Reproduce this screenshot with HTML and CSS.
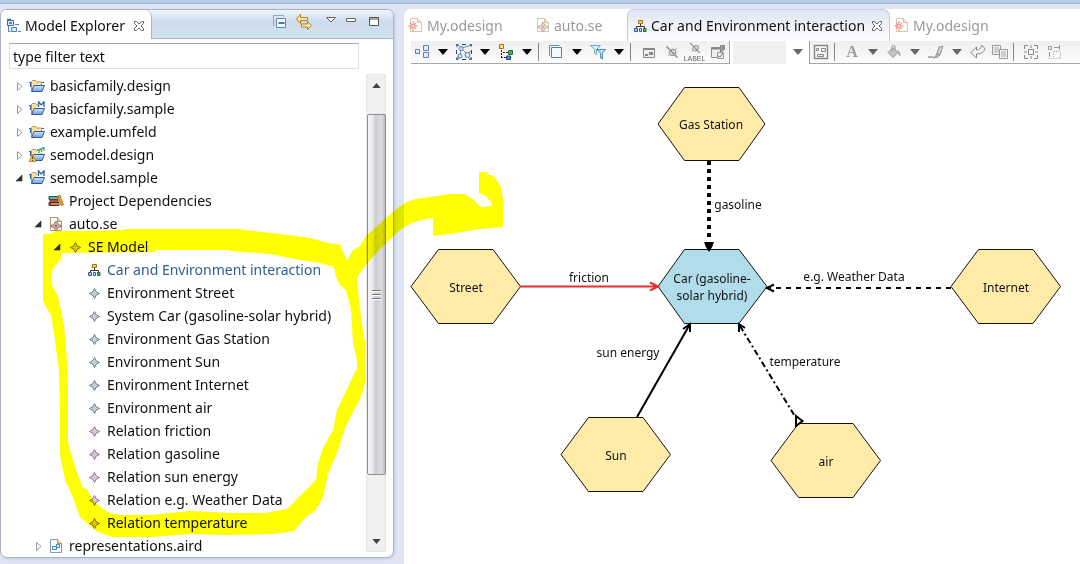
FILE: index.html
```
<!DOCTYPE html>
<html lang="en">
<head>
<meta charset="utf-8">
<title>Model Explorer</title>
<link rel="stylesheet" href="styles.css">
</head>
<body>
<svg class="defs" aria-hidden="true">
  <defs>
    <linearGradient id="folderBlue" x1="0" y1="0" x2="0" y2="1"><stop offset="0" stop-color="#d6e8fa"/><stop offset="1" stop-color="#6d9edb"/></linearGradient>
    <symbol id="closed" viewBox="0 0 15 16"><path d="M3.500 4.500v8l4.500-4z" fill="#fff" stroke="#9a9a9a"/></symbol>
    <symbol id="opened" viewBox="0 0 15 16"><path d="M8 5v6H2z" fill="#333" stroke="#222" stroke-width=".6"/></symbol>
    <symbol id="folder" viewBox="0 0 16 16">
      <path d="M2.500 12.500v-9l1-1h3l1 1.500h5v3" fill="#f7e3a4" stroke="#b8964a"/>
      <path d="M0 4.500h2M13 4.500h2M1.500 5v4" stroke="#3b62ab" fill="none"/>
      <path d="M5 7.500h10.500l-2.500 6H2.500z" fill="url(#folderBlue)" stroke="#2f57a5"/>
    </symbol>
    <symbol id="folderM" viewBox="0 0 16 16">
      <use href="#folder"/><path d="M8.500 7V-.500h7.500V7z" fill="#fff"/><path d="M9.500 6V.8L12.300 4 15 .8V6" fill="none" stroke="#2f6f9c" stroke-width="1.400"/>
    </symbol>
    <symbol id="folderW" viewBox="0 0 16 16">
      <use href="#folder"/><path d="M8 0h8v6H8z" fill="#fff"/><path d="M8 3h2v3M10.500 2h2v3M13 .8h2v3" fill="none" stroke="#2a9a6b" stroke-width="1.300"/>
      <path d="M3.500 7.500l3.500 7H.3z" fill="#f4c64e" stroke="#c98a1b"/><path d="M3.500 9.500v2.500M3.500 13v1" stroke="#5d3500"/>
    </symbol>
    <symbol id="books" viewBox="0 0 16 16">
      <path d="M1 3.500h9v3H1z" fill="#2b8a8d" stroke="#1b585e"/><path d="M2 5h8" stroke="#9ed6cf"/>
      <path d="M2 6.500h8v3H2z" fill="#c64d33" stroke="#813022"/>
      <path d="M1 9.500h10v3H1z" fill="#8f5136" stroke="#5e2f1e"/><path d="M3 11h8" stroke="#e7c39c"/>
      <path d="M10 3l2-1 3.500 10-2.500.5z" fill="#eda42d" stroke="#b06d10" stroke-width=".7"/>
    </symbol>
    <symbol id="page" viewBox="0 0 16 16"><path d="M2.500 1.500h7l4 4v9h-11z" fill="#fffdf6" stroke="#a99a70"/><path d="M9.500 1.500v4h4" fill="#ecd596" stroke="#b98f43"/></symbol>
    <symbol id="seFile" viewBox="0 0 16 16"><use href="#page"/><path d="M8 5l2 3 3.500 2L10 12l-2 3-2-3-3.500-2L6 8z" fill="#c5b9be" stroke="#8b7076"/><circle cx="8" cy="10" r="1.500" fill="#e0574c"/></symbol>
    <symbol id="airdFile" viewBox="0 0 16 16"><path d="M2.500 1.500h7l4 4v9h-11z" fill="#fbfdff" stroke="#7d9bb4"/><path d="M9.500 1.500v4h4" fill="#ecd596" stroke="#b98f43"/><path d="M4.500 8.500h4v3h-4zM8.500 6.500h3v3h-3z" fill="#e5f2fb" stroke="#3c88b8"/></symbol>
    <symbol id="odFile" viewBox="0 0 16 16"><use href="#page"/><path d="M.5 9h9M2 6l6 6M2 12l6-6M5 4v10" stroke="#f0523f" stroke-width="1.300"/><circle cx="5" cy="9" r="1.500" fill="#fff" stroke="#f0523f"/></symbol>
    <symbol id="star" viewBox="0 0 16 16"><path d="M8.500 3.500l1.700 3.300 3.300 1.700-3.300 1.700-1.700 3.300-1.700-3.300-3.300-1.700 3.300-1.700z" fill="#ccd0d6" stroke="currentColor"/></symbol>
    <symbol id="tree" viewBox="0 0 16 16">
      <path d="M8.500 6v3M4.500 11V8.500h8V11" fill="none" stroke="#333"/>
      <path d="M6.500 2.500h4v3h-4z" fill="#f9cf64" stroke="#a8701d"/><path d="M2.500 10.500h3v3h-3z" fill="#a9c4ec" stroke="#37599a"/><path d="M7.500 10.500h2v3h-2z" fill="#dfe7f3" stroke="#37599a"/><path d="M11.500 10.500h2.500v3h-2.500z" fill="#51b063" stroke="#1c6c36"/>
    </symbol>
    <symbol id="x" viewBox="0 0 12 12"><path d="M1.500 1.500h2l2.500 2.500 2.500-2.500h2v2L8 6l2.500 2.500v2h-2L6 8l-2.500 2.500h-2v-2L4 6 1.500 3.500z" fill="#fff" stroke="#666"/></symbol>
    <symbol id="explorer" viewBox="0 0 16 16">
      <path d="M1.500 2.500h6v5h-6z" fill="#d9ebfb" stroke="#2f6fb2"/><path d="M1 1.500h4M3 5h3" stroke="#2f6fb2" stroke-width="1.500"/>
      <path d="M2.500 8v5.500h2M9 6.500h4" fill="none" stroke="#4a80b8"/><path d="M5.500 9.500h5v4h-5z" fill="#d9ebfb" stroke="#4a80b8"/><path d="M12 13.500h3" stroke="#4a80b8"/>
    </symbol>
    <symbol id="collapse" viewBox="0 0 16 16"><path d="M2.500 11.500h-1v-10h10v1" fill="none" stroke="#8ba6bd"/><path d="M4.500 4.500h9v9h-9z" fill="#f3f9fd" stroke="#5b86ad"/><path d="M6.500 9h6" stroke="#174a84" stroke-width="1.400"/></symbol>
    <symbol id="link" viewBox="0 0 16 16"><path d="M4.500.5v3h7v3h-7v3L.5 5z" fill="#fde9a9" stroke="#bf7d0e"/><path d="M11.500 7.500v2.500h-6v3h6v2.500l4-4z" fill="#fde9a9" stroke="#bf7d0e"/></symbol>
    <symbol id="menu" viewBox="0 0 12 16"><path d="M1.500 4.500h9L6 9z" fill="#fff" stroke="#666"/></symbol>
    <symbol id="min" viewBox="0 0 12 16"><path d="M1.500 5.500h9v3h-9z" fill="#fff" stroke="#666"/></symbol>
    <symbol id="max" viewBox="0 0 12 16"><path d="M1.500 4.500h9v8h-9zM1.500 6h9" fill="#fff" stroke="#555"/></symbol>
    <symbol id="down" viewBox="0 0 10 6"><path d="M0 0h10L5 6z" fill="currentColor"/></symbol>
    <symbol id="arrange" viewBox="0 0 16 16"><g fill="#dceafa" stroke="#6380a5"><path d="M1.500 5.500h4v4h-4z"/><path d="M9.500 1.500h5v5h-5z"/><path d="M9.500 8.500h5v5h-5z"/></g></symbol>
    <symbol id="select" viewBox="0 0 16 16"><path d="M1 0v3M0 1h3M15 0v3M13 1h3M1 13v3M0 15h3M15 13v3M13 15h3M6 .5h4M6 15.500h4M.5 6v4M15.500 6v4" stroke="#174f86"/><path d="M5 6l-1 6M6 5l5 5 4-3M5 4l8-2" stroke="#789" fill="none"/><g fill="#dceafa" stroke="#4e79aa"><circle cx="5" cy="4.500" r="2"/><circle cx="4" cy="12" r="2"/><circle cx="11.500" cy="11" r="2.500"/></g></symbol>
    <symbol id="align" viewBox="0 0 16 16"><path d="M3.500 6v8M5 8.500h5M3 13.500h5" stroke="#222" stroke-dasharray="2 1"/><path d="M1.500.5h4v4h-4z" fill="#ffe58b" stroke="#a8730e"/><path d="M10.500 6.500h4v4h-4z" fill="#50ae5e" stroke="#23703a"/><path d="M8.500 12h4v3.500h-4z" fill="#4f82be" stroke="#244f88"/></symbol>
    <symbol id="layers" viewBox="0 0 16 16"><path d="M1.500 12v-10.500h10" fill="none" stroke="#6796bd"/><path d="M3.500 3.500h10v10h-10z" fill="#f1fafe" stroke="#4f80aa"/></symbol>
    <symbol id="filter" viewBox="0 0 16 16"><path d="M.5 1.500h10L6.500 5.500v5l-2-1v-4z" fill="#d8f0fb" stroke="#72a7c9"/><path d="M6.500 5.500h9L12.500 9v6l-2-1V9z" fill="#b7e0f3" stroke="#4e8db5"/></symbol>
    <symbol id="hide" viewBox="0 0 16 16"><path d="M2.500 4.500h11v9h-11z" fill="#eee" stroke="#8c8c8c"/><path d="M2 5h12" stroke="#888" stroke-width="2"/><path d="M8 8h4v3H8zM4 10h3v2H4z" fill="#888"/></symbol>
    <symbol id="pin" viewBox="0 0 16 16"><path d="M5 8.500l3-3.500 3.500 1 .5 3-3 2.500-3-.5z" fill="#ddd" stroke="#888"/><path d="M2.500 2.500l11 11" stroke="#888" stroke-width="1.400"/><path d="M4 12l2-2M11.500 5.500L13 4" stroke="#aaa"/></symbol>
    <symbol id="export" viewBox="0 0 16 16"><path d="M1.500 3.500h9v10h-9z" fill="#eee" stroke="#8c8c8c"/><path d="M1 4.500h9" stroke="#888" stroke-width="2"/><path d="M10.500 1.500h4v4l-3 2-1-2z" fill="#999" stroke="#888"/><path d="M7.500 8.500h6v6h-6z" fill="#eee" stroke="#999"/><path d="M8 12l2 1 3-4" fill="none" stroke="#777"/></symbol>
    <symbol id="layout" viewBox="0 0 16 16"><path d="M1.500 1.500h13v13h-13z" fill="#f6f6f6" stroke="#888" stroke-width="1.400"/><path d="M3.500 4.500h2v2h-2zM8.500 4.500h4v3h-4zM4.500 10.500h6v2h-6z" fill="none" stroke="#888"/></symbol>
    <symbol id="bucket" viewBox="0 0 16 16"><path d="M2 8.500l5-5 5 5-5 5z" fill="#c4c4c4" stroke="#999"/><path d="M6 7V2q1.500-2 3 0v5" fill="none" stroke="#999"/><path d="M11 6q5 2 3 7l-2-4z" fill="#aaa"/></symbol>
    <symbol id="brush" viewBox="0 0 16 16"><path d="M0 13h5" stroke="#999" stroke-width="1.500"/><path d="M5 14q3-1 4-5l3 2q-2 3-7 3z" fill="#aaa" stroke="#999"/><path d="M9 9l2-6 4-1-3 9z" fill="#ccc" stroke="#999"/></symbol>
    <symbol id="undo" viewBox="0 0 16 16"><path d="M.8 8.500L6.500 3v3q4 0 5-4.500 3.500 2 3.500 3.500-2 5-8.500 5v4z" fill="#f4f4f4" stroke="#888"/></symbol>
    <symbol id="copy" viewBox="0 0 16 16"><path d="M.5 1.500h8v9h-8z" fill="#f4f4f4" stroke="#999"/><path d="M2 4h5M2 6h5M2 8h5" stroke="#aaa"/><path d="M7.500 5.500h8v9h-8z" fill="#f4f4f4" stroke="#999"/><path d="M9 8h5M9 10h5M9 12h5" stroke="#aaa"/></symbol>
    <symbol id="fit" viewBox="0 0 16 16"><path d="M1.500 5V1.500H5M11 1.500h3.500V5M14.500 11v3.500H11M5 14.500H1.500V11M8 1v3M8 12v3M1 8h3M12 8h3" fill="none" stroke="#888"/><path d="M5.500 5.500h5v5h-5z" fill="none" stroke="#888"/></symbol>
    <symbol id="resize" viewBox="0 0 16 16"><path d="M2.500 2.500h3v3h-3zM8 3.500h5M13.500 1v5M3.500 8v5" fill="none" stroke="#999"/><path d="M2.500 14.500h12V7M7.500 13V7.500H13" fill="none" stroke="#aaa" stroke-dasharray="1 1"/></symbol>
  </defs>
</svg>

<div class="strip"></div>
<main class="workbench">
  <section class="explorer">
    <header class="view-head">
      <div class="view-tab"><svg class="icon"><use href="#explorer"/></svg><span>Model Explorer</span><button class="bare" aria-label="Close view"><svg class="close"><use href="#x"/></svg></button></div>
      <div class="view-tools">
        <button class="bare" aria-label="Collapse all"><svg class="icon"><use href="#collapse"/></svg></button>
        <button class="bare" aria-label="Link with editor"><svg class="icon"><use href="#link"/></svg></button>
        <button class="bare ctl first" aria-label="View menu"><svg><use href="#menu"/></svg></button>
        <button class="bare ctl" aria-label="Minimize"><svg><use href="#min"/></svg></button>
        <button class="bare ctl low" aria-label="Maximize"><svg><use href="#max"/></svg></button>
      </div>
    </header>
    <input class="filter" type="text" aria-label="Filter" value="type filter text">
    <div class="tree-area">
      <ul class="tree">
        <li class="l0"><svg class="exp"><use href="#closed"/></svg><svg class="icon"><use href="#folder"/></svg><span>basicfamily.design</span></li>
        <li class="l0"><svg class="exp"><use href="#closed"/></svg><svg class="icon"><use href="#folderM"/></svg><span>basicfamily.sample</span></li>
        <li class="l0"><svg class="exp"><use href="#closed"/></svg><svg class="icon"><use href="#folder"/></svg><span>example.umfeld</span></li>
        <li class="l0"><svg class="exp"><use href="#closed"/></svg><svg class="icon"><use href="#folderW"/></svg><span>semodel.design</span></li>
        <li class="l0"><svg class="exp"><use href="#opened"/></svg><svg class="icon"><use href="#folderM"/></svg><span>semodel.sample</span></li>
        <li class="l1"><svg class="exp"></svg><svg class="icon"><use href="#books"/></svg><span>Project Dependencies</span></li>
        <li class="l1"><svg class="exp"><use href="#opened"/></svg><svg class="icon"><use href="#seFile"/></svg><span>auto.se</span></li>
        <li class="l2"><svg class="exp"><use href="#opened"/></svg><svg class="icon gold"><use href="#star"/></svg><span>SE Model</span></li>
        <li class="l3 diagram"><svg class="exp"></svg><svg class="icon"><use href="#tree"/></svg><span>Car and Environment interaction</span></li>
        <li class="l3"><svg class="exp"></svg><svg class="icon blue"><use href="#star"/></svg><span>Environment Street</span></li>
        <li class="l3"><svg class="exp"></svg><svg class="icon violet"><use href="#star"/></svg><span>System Car (gasoline-solar hybrid)</span></li>
        <li class="l3"><svg class="exp"></svg><svg class="icon blue"><use href="#star"/></svg><span>Environment Gas Station</span></li>
        <li class="l3"><svg class="exp"></svg><svg class="icon blue"><use href="#star"/></svg><span>Environment Sun</span></li>
        <li class="l3"><svg class="exp"></svg><svg class="icon blue"><use href="#star"/></svg><span>Environment Internet</span></li>
        <li class="l3"><svg class="exp"></svg><svg class="icon blue"><use href="#star"/></svg><span>Environment air</span></li>
        <li class="l3"><svg class="exp"></svg><svg class="icon pink"><use href="#star"/></svg><span>Relation friction</span></li>
        <li class="l3"><svg class="exp"></svg><svg class="icon pink"><use href="#star"/></svg><span>Relation gasoline</span></li>
        <li class="l3"><svg class="exp"></svg><svg class="icon pink"><use href="#star"/></svg><span>Relation sun energy</span></li>
        <li class="l3"><svg class="exp"></svg><svg class="icon pink"><use href="#star"/></svg><span>Relation e.g. Weather Data</span></li>
        <li class="l3"><svg class="exp"></svg><svg class="icon gold"><use href="#star"/></svg><span>Relation temperature</span></li>
        <li class="l1"><svg class="exp"><use href="#closed"/></svg><svg class="icon"><use href="#airdFile"/></svg><span>representations.aird</span></li>
      </ul>
      <div class="scrollbar">
        <svg class="sb-arrow up"><use href="#down"/></svg>
        <div class="thumb"><i></i><i></i><i></i></div>
        <svg class="sb-arrow"><use href="#down"/></svg>
      </div>
    </div>
  </section>

  <section class="editor">
    <nav class="tabs">
      <button class="tab od"><svg class="icon"><use href="#odFile"/></svg><span>My.odesign</span></button>
      <button class="tab se"><svg class="icon"><use href="#seFile"/></svg><span>auto.se</span></button>
      <button class="tab active"><svg class="icon"><use href="#tree"/></svg><span>Car and Environment interaction</span><svg class="close"><use href="#x"/></svg></button>
      <button class="tab last"><svg class="icon"><use href="#odFile"/></svg><span>My.odesign</span></button>
    </nav>
    <div class="toolbar">
      <div class="group left">
        <button class="tool" aria-label="Arrange"><svg><use href="#arrange"/></svg></button><button class="drop" aria-label="Arrange menu"><svg><use href="#down"/></svg></button>
        <button class="tool" aria-label="Select"><svg><use href="#select"/></svg></button><button class="drop" aria-label="Select menu"><svg><use href="#down"/></svg></button>
        <button class="tool" aria-label="Align"><svg><use href="#align"/></svg></button><button class="drop" aria-label="Align menu"><svg><use href="#down"/></svg></button>
        <span class="sep"></span>
        <button class="tool" aria-label="Layers"><svg><use href="#layers"/></svg></button><button class="drop" aria-label="Layers menu"><svg><use href="#down"/></svg></button>
        <button class="tool" aria-label="Filters"><svg><use href="#filter"/></svg></button><button class="drop" aria-label="Filters menu"><svg><use href="#down"/></svg></button>
        <span class="sep"></span>
        <button class="tool wide" aria-label="Hide element"><svg><use href="#hide"/></svg></button>
        <button class="tool wide" aria-label="Hide"><svg><use href="#pin"/></svg></button>
        <button class="tool wide label-tool" aria-label="Hide label"><svg><use href="#pin"/></svg><span>LABEL</span></button>
        <button class="tool wide" aria-label="Show properties"><svg><use href="#export"/></svg></button>
      </div>
      <div class="combo"></div>
      <button class="drop dim combo-drop" aria-label="Zoom"><svg><use href="#down"/></svg></button>
      <div class="group right">
        <button class="tool" aria-label="Layout"><svg><use href="#layout"/></svg></button>
        <span class="sep"></span>
        <button class="tool letter">A</button><button class="drop dim" aria-label="Font menu"><svg><use href="#down"/></svg></button>
        <button class="tool" aria-label="Fill"><svg><use href="#bucket"/></svg></button><button class="drop dim" aria-label="Fill menu"><svg><use href="#down"/></svg></button>
        <button class="tool" aria-label="Line"><svg><use href="#brush"/></svg></button><button class="drop dim" aria-label="Line menu"><svg><use href="#down"/></svg></button>
        <button class="tool" aria-label="Reset"><svg><use href="#undo"/></svg></button>
        <button class="tool" aria-label="Copy layout"><svg><use href="#copy"/></svg></button>
        <span class="sep"></span>
        <button class="tool" aria-label="Auto size"><svg><use href="#fit"/></svg></button>
        <button class="tool wide" aria-label="Resize"><svg><use href="#resize"/></svg></button>
      </div>
    </div>
    <div class="canvas">
      <svg class="chart" width="676" height="500" viewBox="404 64 676 500">
        <g class="node">
          <path d="M658 124l26.500-36.500h54.500L765 124l-26 36.500h-54.500z"/>
          <path d="M411 286.500l27.500-37h54.500l27.500 37-27.500 37h-54.500z"/>
          <path class="car" d="M658 286.500l26.500-37H739l28 37-28 37h-54.500z"/>
          <path d="M951 286.500l27.500-37h54.500l27.500 37-27.500 37h-54.500z"/>
          <path d="M561 454.500l27.500-37h54.500l27.500 37-27.500 37h-54.500z"/>
          <path d="M771 460.500l27.500-37h54.500l27.500 37-27.500 37h-54.500z"/>
        </g>
        <g class="edge">
          <path class="thick" d="M709 161v80"/>
          <path class="head" d="M705.500 243h7l-1 3-2.500 4-2.500-4z"/>
          <path class="red" d="M520 286.500h137M650 282.500l8 4-8 4"/>
          <path d="M951 288H770" stroke-dasharray="5 5"/><path d="M774 284.500l-7 3.500 7 3.500"/>
          <path d="M637 417l53-93M683 329l7-5v8"/>
          <path d="M740 326l56 92" stroke-dasharray="6 3 2 3"/><path d="M739 332v-8l6 4"/>
          <path d="M796 416v10l6.500-5z"/>
        </g>
        <g class="names">
          <text x="711" y="129">Gas Station</text>
          <text x="466" y="292">Street</text>
          <text x="712" y="283">Car (gasoline-</text><text x="712" y="300">solar hybrid)</text>
          <text x="1006" y="292">Internet</text>
          <text x="616" y="460">Sun</text>
          <text x="826" y="466">air</text>
          <text x="738" y="209">gasoline</text>
          <text x="589" y="282">friction</text>
          <text x="854" y="281">e.g. Weather Data</text>
          <text x="628" y="357">sun energy</text>
          <text x="805" y="366">temperature</text>
        </g>
      </svg>
    </div>
  </section>
</main>
<svg class="marker" width="510" height="545" viewBox="0 0 510 545" aria-hidden="true">
  <path fill-rule="evenodd" d="M43 234H50L56 231H90L125 230V229H237L262 232 280 234 310 238 328 243 341 245 342 250 345 256 348 260 352 251 360 246 366 236 385 219 400 206 407 202 415 199 430 197 450 194H465L468 196 474 200 480 207 492 206 491 202 486 196 479 193V172H487L488 175H492L497 180 501 187 503 199V227L480 229 450 234 433 236V218L420 220 410 224 400 230 385 244 370 260 362 270 357 278 359 300 362 325 365 342V383L361 397 354 410 345 428 338 450 328 474 323 497 316 510 305 518 294 531 275 534 225 535 190 534 150 537H112L98 532 88 524 80 517 72 495 65 480 60 455V410L59 370 55 340 51 315 46 307 43 300ZM61 253V260L56 264 53 268 51 277 52 285 58 296 64 325 67 360 68 385V443L76 470 83 488 87 489 93 500 103 509 110 513 120 515H150L190 511 230 513 265 513 287 509 300 496 316 480 318 464 323 448 333 430 337 410 350 383 357 368 357 360 353 342 351 310 346 290 340 285 336 277 334 267 320 263 300 260 270 254 230 251V250H156V252Z"/>
</svg>
</body>
</html>
```
FILE: styles.css
```
* { box-sizing: border-box; }
body {
  margin: 0;
  height: 100vh;
  display: flex;
  flex-direction: column;
  overflow: hidden;
  background: #e0e5f5;
  color: #111;
  font: 14px/19px "Noto Sans", "Open Sans", sans-serif;
}
.defs { position: absolute; width: 0; height: 0; }
button, input { font: inherit; color: inherit; }
button { border: 0; padding: 0; background: none; display: flex; align-items: center; white-space: nowrap; }
svg { display: block; flex: none; }
.icon { width: 16px; height: 16px; }
.close { width: 12px; height: 12px; }
.strip { height: 4px; flex: none; background: #b2cde6; border-bottom: 1px solid #9fb3ce; }
.workbench { flex: 1; min-height: 0; display: flex; gap: 10px; padding-top: 5px; }

.explorer {
  flex: 0 0 394px;
  margin-bottom: 6px;
  display: flex;
  flex-direction: column;
  background: #fff;
  border: 1px solid #a9b1cb;
  border-radius: 7px;
  box-shadow: 1px 1px 3px #c3cadd;
  overflow: hidden;
}
.view-head { flex: none; height: 29px; display: flex; justify-content: space-between; background: linear-gradient(#f1f6fa, #ccdcec 40%, #d3e2f0); border-bottom: 1px solid #a9b5cf; }
.view-tab { height: 29px; display: flex; align-items: center; gap: 3px; padding: 2px 6px 0 5px; background: #fff; border-right: 1px solid #a9b5cf; border-radius: 0 7px 0 0; }
.view-tab .bare { margin-left: 5px; }
.view-tools { display: flex; gap: 8px; padding: 3px 13px 0 0; align-items: flex-start; }
.view-tools .icon { margin-top: 1px; }
.ctl svg { width: 12px; height: 16px; }
.ctl.first { margin-left: 5px; }
.ctl.low { margin-left: 3px; }
.filter { flex: none; width: 350px; height: 26px; margin: 4px 0 5px 8px; padding: 0 3px; border: 1px solid #dce1e8; border-top-color: #a5a9ae; background: #fff; }

.tree-area { flex: 1; min-height: 0; margin: 0 7px 5px 0; display: flex; }
.tree { flex: 1; margin: 0; padding: 0; list-style: none; }
.tree li { height: 23px; display: flex; align-items: center; white-space: nowrap; }
.exp { width: 15px; height: 16px; }
.tree .icon { margin-right: 5px; }
.l0 { padding-left: 13px; }
.l1 { padding-left: 32px; }
.l2 { padding-left: 51px; }
.l3 { padding-left: 70px; }
.diagram { color: #33608f; }
.gold { color: #a0600c; }
.blue { color: #5f7f9f; }
.violet { color: #8f6ba8; }
.pink { color: #a867a6; }
.scrollbar { width: 20px; display: flex; flex-direction: column; align-items: center; background: #f0f0f0; border: 1px solid #e6e6e6; }
.sb-arrow { width: 9px; height: 5px; margin: 7px 0; color: #444; }
.sb-arrow.up { transform: rotate(180deg); margin: 8px 0 26px; }
.thumb { width: 19px; flex: 0 1 361px; display: flex; flex-direction: column; align-items: center; justify-content: center; gap: 2px; border: 1px solid #8e8f94; border-radius: 2px; background: linear-gradient(90deg, #f6f6f6, #e3e4e6 35%, #cbccd0 40%, #dcdde0 80%, #b9babf); }
.scrollbar .sb-arrow:last-child { margin-top: auto; }
.thumb i { width: 9px; height: 2px; background: #777; border-bottom: 1px solid #fff; }

.editor { flex: 1; min-width: 0; display: flex; flex-direction: column; background: #fff; border-radius: 7px 0 0 0; overflow: hidden; }
.tabs { height: 32px; flex: none; display: flex; }
.tab { color: #9a9a9a; gap: 3px; }
.tab .icon { opacity: .55; }
.tab.od { padding-left: 4px; width: 131px; }
.tab.se { width: 92px; }
.tab.active { width: 263px; padding: 0 6px 0 4px; color: #111; background: linear-gradient(#e0e4f2, #fff); border: 1px solid #c6cce0; border-bottom: 0; border-radius: 7px 7px 0 0; }
.tab.active .icon { opacity: 1; }
.tab.active .close { margin-left: auto; }
.tab.last { padding-left: 4px; }

.toolbar { height: 23px; flex: none; display: flex; padding-left: 7px; }
.group { display: flex; align-items: center; background: linear-gradient(#efefef, #fcfcfc); border-bottom: 1px solid #a8a8a8; }
.group.left { border-right: 1px solid #a8a8a8; }
.group.right { flex: 1; border-left: 1px solid #a0a0a0; }
.tool { width: 22px; height: 22px; justify-content: center; }
.tool.wide { width: 23px; }
.tool svg { width: 16px; height: 16px; }
.drop { width: 20px; height: 22px; justify-content: center; color: #000; }
.drop svg { width: 10px; height: 6px; }
.drop.dim { color: #666; }
.sep { width: 1px; height: 18px; margin: 0 6px 0 1px; background: #888; }
.group.right .sep { margin-left: 2px; }
.combo { width: 53px; margin-left: 3px; background: #f0f0f0; }
.combo-drop { margin: 0 1px 0 2px; }
.label-tool { flex-direction: column; justify-content: flex-start; }
.label-tool svg { width: 14px; height: 14px; }
.label-tool span { font: 7px/8px "Liberation Sans", sans-serif; color: #666; }
.letter { font: bold 16px/22px "Liberation Serif", serif; color: #999; }

.canvas { flex: 1; min-height: 0; overflow: hidden; }
.node path { fill: #ffeca9; stroke: #111; }
.node .car { fill: #b0dde9; }
.edge path { fill: none; stroke: #000; stroke-width: 2; }
.edge .thick { stroke-width: 4; stroke-dasharray: 4 4; }
.edge .head { fill: #000; }
.edge .red { stroke: #ee2c2c; }
.names text { font: 12px "Noto Sans", sans-serif; text-anchor: middle; fill: #111; }
.marker { position: absolute; left: 0; top: 0; mix-blend-mode: multiply; pointer-events: none; fill: #ff0; }
```
